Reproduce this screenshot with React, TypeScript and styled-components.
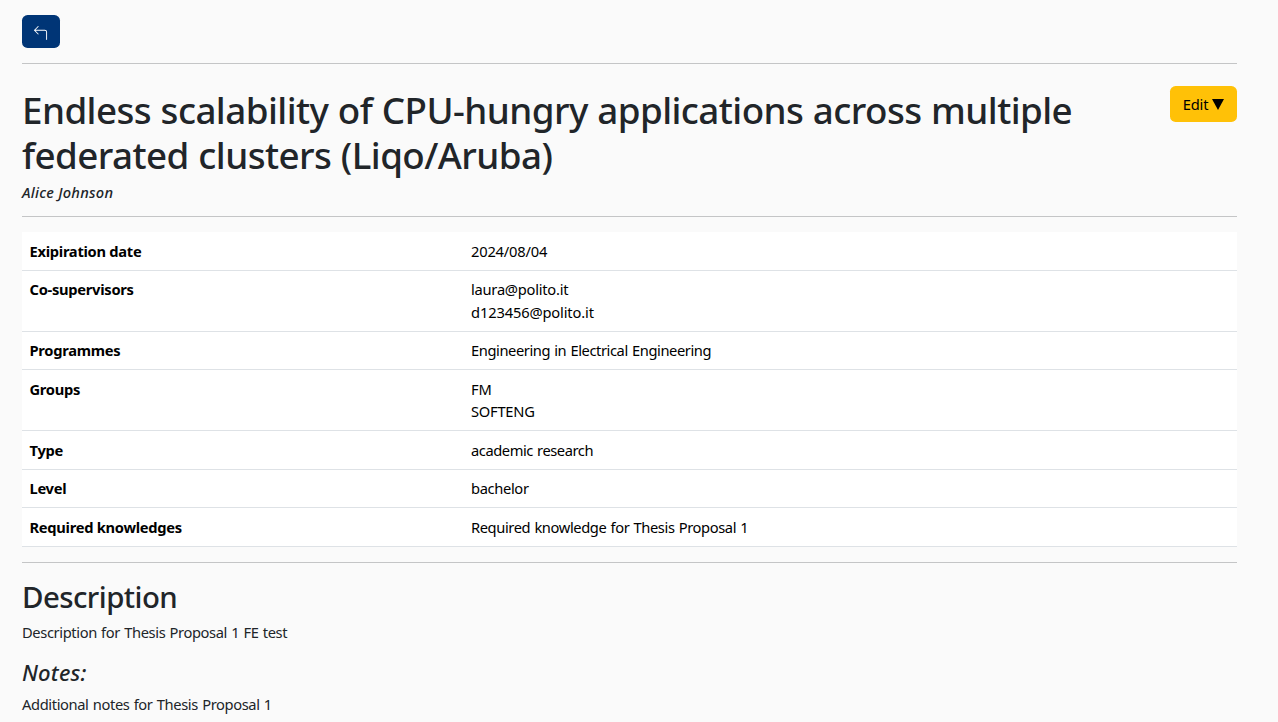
import React from "react";
import styled, { createGlobalStyle } from "styled-components";
import { BsArrow90DegLeft } from "react-icons/bs";

const GlobalStyle = createGlobalStyle`
  html {
    font-size: 15px;
  }
  body {
    margin: 0;
    min-height: 100vh;
    overflow: hidden;
    background: #fafafa;
    color: #212529;
    font-family: "Segoe UI", "Noto Sans", "Open Sans", sans-serif;
    font-size: 14.7px;
    line-height: 22.5px;
  }
`;

const Page = styled.main`
  display: flex;
  flex-direction: column;
  width: 1215px;
  height: 722px;
  box-sizing: border-box;
  padding-top: 15px;
  margin-left: 22px;
`;

const BackButton = styled.button`
  display: flex;
  align-items: center;
  justify-content: center;
  align-self: flex-start;
  flex: none;
  width: 38px;
  height: 33px;
  padding: 3px 1px 0 0;
  border: 0;
  border-radius: 5.6px;
  background: #003576;
  color: #fff;
  font-size: 15px;
`;

const Rule = styled.hr`
  flex: none;
  width: 100%;
  height: 1px;
  margin: 15px 0;
  border: 0;
  background: #c4c5c6;
`;

const Header = styled.header`
  display: flex;
  justify-content: space-between;
  align-items: flex-start;
  padding-top: 7px;
`;

const TitleBlock = styled.div`
  display: flex;
  flex-direction: column;
  width: 1110px;
`;

const Title = styled.h1`
  margin: 2px 0 5px;
  font-size: 36.75px;
  font-weight: 500;
  line-height: 45px;
  letter-spacing: -0.56px;
  word-spacing: 0.5px;
`;

const Author = styled.h2`
  margin: 0;
  font-size: 14.7px;
  font-style: italic;
  font-weight: 500;
  line-height: 18px;
  letter-spacing: 0.25px;
`;

const EditButton = styled.button`
  display: flex;
  align-items: center;
  justify-content: center;
  gap: 4px;
  flex: none;
  width: 67px;
  height: 36px;
  padding: 0;
  border: 0;
  border-radius: 5.6px;
  background: #ffc107;
  color: #000;
  font: inherit;
  letter-spacing: -0.2px;
`;

const Caret = styled.svg`
  width: 12px;
  height: 11px;
  fill: currentColor;
`;

const Details = styled.dl`
  margin: 0;
  display: flex;
  flex-direction: column;
  color: #000;
  background: #fff;
`;

const DetailRow = styled.div`
  display: grid;
  grid-template-columns: 441.5px 1fr;
  padding: 7.5px;
  border-bottom: 1px solid #dee2e6;
`;

const DetailLabel = styled.dt`
  font-weight: 700;
  letter-spacing: -0.28px;
`;

const DetailValue = styled.dd<{ $tracking: number }>`
  margin: 0;
  letter-spacing: ${(p) => p.$tracking}px;
  word-spacing: 0.8px;
`;

const SectionTitle = styled.h2`
  margin: 1px 0 6.5px;
  font-size: 29.4px;
  font-weight: 500;
  line-height: 36px;
  letter-spacing: -0.55px;
`;

const NotesTitle = styled.h4`
  margin: 0 0 7.5px;
  font-size: 22.05px;
  font-style: italic;
  font-weight: 500;
  line-height: 27px;
  letter-spacing: 0.2px;
`;

const Paragraph = styled.p`
  margin: 0 0 15px;
  letter-spacing: -0.38px;
  word-spacing: 0.8px;
`;

type Detail = { label: string; values: { text: string; tracking: number }[] };

const details: Detail[] = [
  { label: "Exipiration date", values: [{ text: "2024/08/04", tracking: -0.2 }] },
  {
    label: "Co-supervisors",
    values: [
      { text: "laura@polito.it", tracking: -0.25 },
      { text: "d123456@polito.it", tracking: -0.15 },
    ],
  },
  { label: "Programmes", values: [{ text: "Engineering in Electrical Engineering", tracking: -0.42 }] },
  {
    label: "Groups",
    values: [
      { text: "FM", tracking: -0.2 },
      { text: "SOFTENG", tracking: -0.25 },
    ],
  },
  { label: "Type", values: [{ text: "academic research", tracking: -0.44 }] },
  { label: "Level", values: [{ text: "bachelor", tracking: -0.35 }] },
  { label: "Required knowledges", values: [{ text: "Required knowledge for Thesis Proposal 1", tracking: -0.4 }] },
];

export default function App() {
  return (
    <>
      <GlobalStyle />
      <Page>
        <BackButton aria-label="Back">
          <BsArrow90DegLeft />
        </BackButton>
        <Rule />
        <Header>
          <TitleBlock>
            <Title>Endless scalability of CPU-hungry applications across multiple federated clusters (Liqo/Aruba)</Title>
            <Author>Alice Johnson</Author>
          </TitleBlock>
          <EditButton>
            <span>Edit</span>
            <Caret viewBox="0 0 12 11">
              <path d="M0 0h12L6 11z" />
            </Caret>
          </EditButton>
        </Header>
        <Rule />
        <Details>
          {details.map((row) => (
            <DetailRow key={row.label}>
              <DetailLabel>{row.label}</DetailLabel>
              <div>
                {row.values.map((v) => (
                  <DetailValue key={v.text} $tracking={v.tracking}>
                    {v.text}
                  </DetailValue>
                ))}
              </div>
            </DetailRow>
          ))}
        </Details>
        <Rule />
        <SectionTitle>Description</SectionTitle>
        <Paragraph>Description for Thesis Proposal 1 FE test</Paragraph>
        <NotesTitle>Notes:</NotesTitle>
        <Paragraph>Additional notes for Thesis Proposal 1</Paragraph>
      </Page>
    </>
  );
}
